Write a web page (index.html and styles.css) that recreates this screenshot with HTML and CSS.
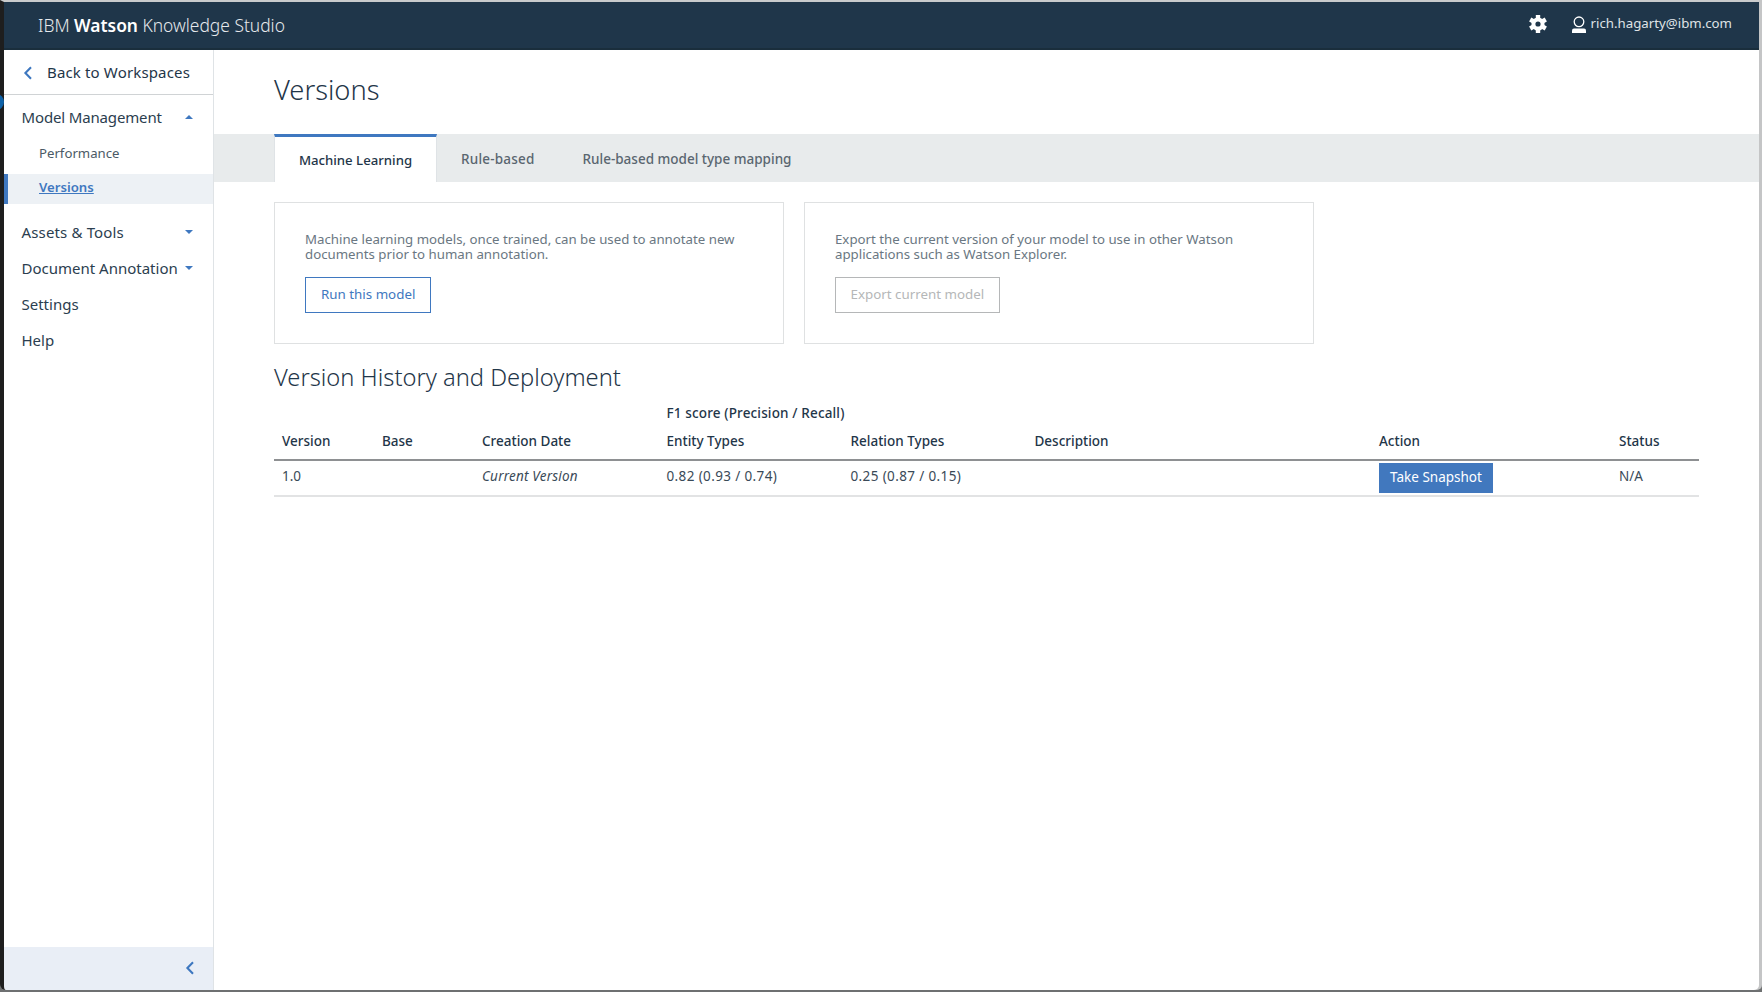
FILE: index.html
```html
<!DOCTYPE html>
<html lang="en">
<head>
<meta charset="utf-8">
<title>Versions - IBM Watson Knowledge Studio</title>
<link rel="stylesheet" href="styles.css">
</head>
<body>
<span class="dock-dot"></span>
<div class="window">
  <header class="topbar">
    <div class="brand">IBM <b>Watson</b> Knowledge Studio</div>
    <div class="topbar-right">
      <svg class="gear" viewBox="0 0 18 18" width="18" height="18">
        <g fill="#fff">
          <rect x="6.800" y="0" width="4.400" height="4.500"/>
          <rect x="6.800" y="0" width="4.400" height="4.500" transform="rotate(60 9 9)"/>
          <rect x="6.800" y="0" width="4.400" height="4.500" transform="rotate(120 9 9)"/>
          <rect x="6.800" y="0" width="4.400" height="4.500" transform="rotate(180 9 9)"/>
          <rect x="6.800" y="0" width="4.400" height="4.500" transform="rotate(240 9 9)"/>
          <rect x="6.800" y="0" width="4.400" height="4.500" transform="rotate(300 9 9)"/>
        </g>
        <circle cx="9" cy="9" r="4.600" fill="none" stroke="#fff" stroke-width="4"/>
      </svg>
      <span class="user">
        <svg viewBox="0 0 14 17" width="14" height="17"><circle cx="7" cy="5.800" r="4.800" fill="none" stroke="#fff" stroke-width="1.300"/><path fill="#fff" d="M0 17v-2.500q0-2 2-2h10q2 0 2 2V17z"/></svg>
        <span>rich.hagarty@ibm.com</span>
      </span>
    </div>
  </header>
  <div class="body">
    <nav class="sidebar">
      <a class="back">
        <svg viewBox="0 0 10 14" width="10" height="14"><path d="M8 1.200 2.400 7 8 12.800" fill="none" stroke="#3f78c0" stroke-width="2.100"/></svg>
        <span>Back to Workspaces</span>
      </a>
      <div class="nav-group">
        <div class="nav-item tight"><span>Model Management</span><i class="caret up"></i></div>
        <div class="sub-item">Performance</div>
        <div class="sub-item active"><span>Versions</span></div>
      </div>
      <div class="nav-rest">
        <div class="nav-item loose"><span>Assets &amp; Tools</span><i class="caret"></i></div>
        <div class="nav-item"><span>Document Annotation</span><i class="caret"></i></div>
        <div class="nav-item"><span>Settings</span></div>
        <div class="nav-item"><span>Help</span></div>
      </div>
      <div class="collapse">
        <svg viewBox="0 0 10 14" width="10" height="14"><path d="M8 1.200 2.400 7 8 12.800" fill="none" stroke="#3f78c0" stroke-width="2.100"/></svg>
      </div>
    </nav>
    <main class="main">
      <h1 class="title">Versions</h1>
      <div class="tabs">
        <div class="tab selected">Machine Learning</div>
        <div class="tab wide">Rule-based</div>
        <div class="tab">Rule-based model type mapping</div>
      </div>
      <div class="cards">
        <section class="card">
          <p>Machine learning models, once trained, can be used to annotate new documents prior to human annotation.</p>
          <button class="btn primary">Run this model</button>
        </section>
        <section class="card">
          <p>Export the current version of your model to use in other Watson applications such as Watson Explorer.</p>
          <button class="btn disabled">Export current model</button>
        </section>
      </div>
      <h2 class="subtitle">Version History and Deployment</h2>
      <table class="table">
        <colgroup>
          <col class="c-version"><col class="c-base"><col class="c-date"><col class="c-entity"><col class="c-rel"><col class="c-desc"><col class="c-action"><col class="c-status">
        </colgroup>
        <thead>
          <tr class="group-row"><th></th><th></th><th></th><th colspan="2">F1 score (Precision / Recall)</th><th></th><th></th><th></th></tr>
          <tr class="head-row"><th>Version</th><th>Base</th><th>Creation Date</th><th>Entity Types</th><th>Relation Types</th><th>Description</th><th>Action</th><th>Status</th></tr>
        </thead>
        <tbody>
          <tr>
            <td>1.0</td><td></td><td class="date"><em>Current Version</em></td><td class="num">0.82 (0.93 / 0.74)</td><td class="num">0.25 (0.87 / 0.15)</td><td></td>
            <td class="action-cell"><button class="snapshot">Take Snapshot</button></td><td>N/A</td>
          </tr>
        </tbody>
      </table>
    </main>
  </div>
</div>
</body>
</html>
```
FILE: styles.css
```css
* { box-sizing: border-box; }
html, body { margin: 0; height: 100%; }
body {
  background: #6e7071;
  font-family: "Noto Sans", "Open Sans", sans-serif;
  color: #1f3649;
  overflow: hidden;
  position: relative;
}
.dock-dot {
  position: absolute;
  left: -12px;
  top: 94px;
  width: 16px;
  height: 16px;
  border-radius: 50%;
  background: #0f62a8;
  z-index: 2;
}
.window {
  height: 990px;
  width: 1759px;
  border-top: 2px solid #c9cbcc;
  border-left: 4px solid #1e1e1e;
  border-bottom-left-radius: 6px;
  border-bottom-right-radius: 5px;
  box-shadow: 3px 0 0 #c4c5c6;
  background: #fff;
  display: flex;
  flex-direction: column;
  overflow: hidden;
}
.topbar {
  height: 48px;
  flex: none;
  background: #1f364a;
  border-bottom: 2px solid #1a2e3c;
  color: #fff;
  display: flex;
  align-items: center;
  justify-content: space-between;
  padding: 0 27px 0 34px;
}
.brand { font-size: 17.400px; font-weight: 300; color: #e6e9ec; }
.brand b { font-weight: 600; color: #fff; }
.topbar-right { display: flex; align-items: center; gap: 25px; margin-top: -2px; }
.gear { display: block; }
.user { display: flex; align-items: center; gap: 5px; font-size: 13.250px; color: #dfe3e6; }
.user span { margin-top: -2px; }
.body { flex: 1; display: flex; min-height: 0; }
.sidebar {
  width: 210px;
  flex: none;
  border-right: 1px solid #dfe3e6;
  display: flex;
  flex-direction: column;
  font-size: 15px;
}
.back {
  height: 45px;
  flex: none;
  display: flex;
  align-items: center;
  gap: 14px;
  padding: 0 0 0 19px;
  border-bottom: 1px solid #d0d3d5;
  letter-spacing: .15px;
}
.back svg { margin-top: 2px; }
.nav-group { padding-top: 4px; }
.nav-rest { padding-top: 6px; flex: 1; }
.nav-item {
  height: 36px;
  display: flex;
  align-items: center;
  justify-content: space-between;
  padding: 0 20px 0 17.500px;
  color: #2b3e4f;
}
.nav-item.tight { letter-spacing: -.15px; }
.nav-item.loose { letter-spacing: .15px; }
.caret {
  width: 0;
  height: 0;
  border-left: 4px solid transparent;
  border-right: 4px solid transparent;
  border-top: 4px solid #3f78c0;
}
.caret.up { border-top: 0; border-bottom: 4px solid #3f78c0; }
.sub-item {
  height: 30px;
  margin-top: 3px;
  display: flex;
  align-items: center;
  padding-left: 35px;
  font-size: 13.200px;
  color: #4b5a66;
}
.sub-item.active {
  margin-top: 6px;
  margin-bottom: 4px;
  background: #edf1f5;
  border-left: 4px solid #3f78c0;
  padding-left: 31px;
  padding-bottom: 5px;
  color: #3f78c0;
  font-weight: 600;
}
.sub-item.active span { text-decoration: underline; }
.collapse {
  height: 43px;
  flex: none;
  background: #e9eef6;
  display: flex;
  align-items: center;
  justify-content: flex-end;
  padding: 0 18px 2px 0;
}
.main { flex: 1; min-width: 0; overflow: hidden; }
.title {
  margin: 0;
  padding: 21px 0 0 60px;
  height: 84px;
  font-size: 27.300px;
  line-height: 38px;
  font-weight: 300;
  color: #1f3649;
}
.tabs {
  height: 48px;
  background: #e8ebec;
  display: flex;
  padding-left: 60px;
  font-size: 13.500px;
  font-weight: 500;
  color: #5a6670;
}
.tab { padding: 1px 24px 0; display: flex; align-items: center; }
.tab.wide { letter-spacing: .2px; }
.tab.selected {
  width: 163px;
  padding: 0;
  font-size: 13.200px;
  justify-content: center;
  background: #fff;
  border-top: 3px solid #3f78c0;
  border-left: 1px solid #dfe3e6;
  border-right: 1px solid #dfe3e6;
  color: #1f3649;
}
.cards { display: flex; gap: 20px; padding: 20px 0 0 60px; }
.card {
  width: 510px;
  height: 142px;
  border: 1px solid #dfe1e2;
  padding: 29px 30px 0;
}
.card p {
  margin: 0 0 15px;
  font-size: 13.250px;
  line-height: 15px;
  color: #6a7782;
}
.btn {
  display: block;
  height: 36px;
  padding: 0 15px 2px;
  background: #fff;
  font: inherit;
  font-size: 13.350px;
}
.btn.primary { border: 1px solid #3f78c0; color: #3f78c0; }
.btn.disabled { border: 1px solid #b5b7b8; color: #b5b7b8; padding: 0 14.500px 2px; }
.subtitle {
  margin: 17px 0 0 60px;
  font-size: 23.700px;
  line-height: 32px;
  font-weight: 300;
  color: #1f3649;
}
.table {
  margin: 6px 0 0 60px;
  width: 1425px;
  table-layout: fixed;
  border-collapse: collapse;
  font-size: 13.500px;
}
.c-version { width: 100px; }
.c-base { width: 100px; }
.c-date { width: 184.500px; }
.c-entity, .c-rel { width: 184px; }
.c-desc { width: 344.500px; }
.c-action { width: 240px; }
.c-status { width: 88px; }
.table th { text-align: left; font-weight: 500; padding: 0 8px; white-space: nowrap; }
.group-row th { height: 28px; letter-spacing: .15px; }
.head-row th { height: 33px; padding-bottom: 4px; border-bottom: 2px solid #8e9092; }
.table td { height: 36px; padding: 0 8px 4px; border-bottom: 2px solid #e2e3e4; color: #3a4a58; white-space: nowrap; }
.table td.num { letter-spacing: .37px; }
.table td.date { letter-spacing: .2px; }
.table td.action-cell { padding-bottom: 0; }
.snapshot {
  display: block;
  width: 114px;
  height: 30px;
  padding: 0 0 3px;
  border: 0;
  background: #4178be;
  color: #fff;
  font: inherit;
}
```
